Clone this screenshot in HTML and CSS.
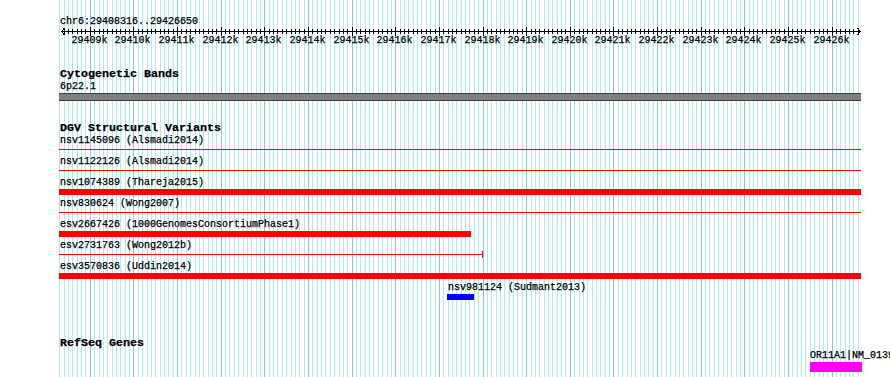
FILE: index.html
```html
<!DOCTYPE html>
<html lang="en">
<head>
  <meta charset="UTF-8" />
  <title>chr6:29408316..29426650</title>
  <link rel="stylesheet" href="styles.css">
</head>
<body>

  <div id="panel">
    <svg id="grid" width="890" height="377"></svg>

    <div class="ruler">
      <div class="chr-label">chr6:29408316..29426650</div>
      <svg id="ruler" class="ruler-svg" width="890" height="21"></svg>
    </div>

    <div class="track cyto">
      <div class="track-title">Cytogenetic Bands</div>
      <div class="label">6p22.1</div>
      <div class="band"></div>
    </div>

    <div class="track dgv">
      <div class="track-title">DGV Structural Variants</div>

      <div class="feature">
        <div class="label">nsv1145096 (Alsmadi2014)</div>
        <div class="glyph"><div class="sv-line"></div></div>
      </div>
      <div class="feature">
        <div class="label">nsv1122126 (Alsmadi2014)</div>
        <div class="glyph"><div class="sv-line"></div></div>
      </div>
      <div class="feature">
        <div class="label">nsv1074389 (Thareja2015)</div>
        <div class="glyph"><div class="sv-bar"></div></div>
      </div>
      <div class="feature">
        <div class="label">nsv830624 (Wong2007)</div>
        <div class="glyph"><div class="sv-line"></div></div>
      </div>
      <div class="feature">
        <div class="label">esv2667426 (1000GenomesConsortiumPhase1)</div>
        <div class="glyph"><div class="sv-bar" style="width: 412px;"></div></div>
      </div>
      <div class="feature">
        <div class="label">esv2731763 (Wong2012b)</div>
        <div class="glyph"><div class="sv-line clipped" style="width: 424px;"></div></div>
      </div>
      <div class="feature">
        <div class="label">esv3570836 (Uddin2014)</div>
        <div class="glyph"><div class="sv-bar"></div></div>
      </div>
      <div class="feature" style="margin-left: 388px;">
        <div class="label">nsv981124 (Sudmant2013)</div>
        <div class="glyph"><div class="sv-bar gain" style="width: 27px;"></div></div>
      </div>
    </div>

    <div class="track refseq">
      <div class="track-title">RefSeq Genes</div>
      <div class="gene" style="margin-left: 751px;">
        <div class="label gene-label">OR11A1|NM_013937</div>
        <div class="gene-bar" style="width: 52px;"></div>
      </div>
    </div>
  </div>

  <script>
    const start = 29408316;
    const end = 29426650;
    const scale = 800 / (end - start + 1);

    function px(bp) {
      return Math.floor(60.5 + (bp - start) * scale);
    }

    // background grid: minor line every 100bp, major every 1kb
    let grid = "";
    for (let bp = 29408300; bp <= 29426600; bp += 100) {
      const major = bp % 1000 === 0;
      grid += `<rect x="${px(bp)}" y="0" width="1" height="377" class="${major ? "major" : "minor"}"/>`;
    }
    document.getElementById("grid").innerHTML = grid;

    // ruler: line, arrows, ticks and kb labels
    let ruler = `<rect x="61" y="5" width="800" height="1" class="ink"/>`;
    ruler += `<polyline points="64.5,2 61.5,5.5 64.5,9" class="arrow"/>`;
    ruler += `<polyline points="857.5,2 860.5,5.5 857.5,9" class="arrow"/>`;
    for (let bp = 29408400; bp <= 29426600; bp += 100) {
      const x = px(bp);
      if (bp % 1000 === 0) {
        ruler += `<rect x="${x}" y="1" width="1" height="9" class="ink"/>`;
        ruler += `<text x="${x - 0.5}" y="17" class="tick-label">${bp / 1000}k</text>`;
      } else {
        ruler += `<rect x="${x}" y="3" width="1" height="5" class="ink"/>`;
      }
    }
    document.getElementById("ruler").innerHTML = ruler;
  </script>

</body>
</html>
```

FILE: styles.css
```css
body {
  margin: 0;
  background: #fff;
  overflow: hidden;
  font-family: "Liberation Mono", monospace;
  font-size: 10px;
  color: #000;
  -webkit-text-stroke: 0.25px #000;
}

#panel {
  position: relative;
  isolation: isolate;
  width: 890px;
  height: 377px;
  overflow: hidden;
}

#grid {
  position: absolute;
  left: 0;
  top: 0;
  z-index: -1;
  shape-rendering: crispEdges;
}

#grid .minor {
  fill: #a9eeee;
}

#grid .major {
  fill: #87c6ee;
}

/* ruler */
.chr-label {
  padding: 15px 0 0 60px;
  line-height: 13px;
}

.ruler-svg {
  display: block;
  margin-top: -2px;
  shape-rendering: crispEdges;
}

.ruler-svg .ink {
  fill: #000;
}

.ruler-svg .arrow {
  fill: none;
  stroke: #000;
  stroke-width: 1;
}

.ruler-svg .tick-label {
  font-family: "Liberation Mono", monospace;
  font-size: 10px;
  text-anchor: middle;
  fill: #000;
  stroke: #000;
  stroke-width: 0.25px;
}

/* tracks */
.track {
  margin-left: 59px;
  width: 802px;
}

.track-title {
  font-weight: bold;
  font-size: 11.67px;
  line-height: 13px;
  padding-left: 1px;
  white-space: nowrap;
}

.label {
  line-height: 12px;
  padding-left: 1px;
  white-space: nowrap;
}

.cyto {
  margin-top: 21px;
}

.band {
  height: 6px;
  border-top: 1px solid #3c3c3c;
  border-bottom: 1px solid #3c3c3c;
  background: #808080;
}

.dgv {
  margin-top: 21px;
}

.feature {
  height: 21px;
}

.glyph {
  height: 9px;
}

.sv-line {
  position: relative;
  margin-top: 2px;
  height: 1px;
  background: #ff0000;
}

.sv-line.clipped::after {
  content: '';
  position: absolute;
  right: 0;
  top: -3px;
  width: 1px;
  height: 7px;
  background: #ff0000;
}

.sv-bar {
  height: 6px;
  background: #ff0000;
}

.sv-bar.gain {
  background: #0000ff;
}

.refseq {
  margin-top: 34px;
}

.gene-label {
  padding-left: 0;
}

.gene-bar {
  height: 10px;
  background: #ff00ff;
}
```
